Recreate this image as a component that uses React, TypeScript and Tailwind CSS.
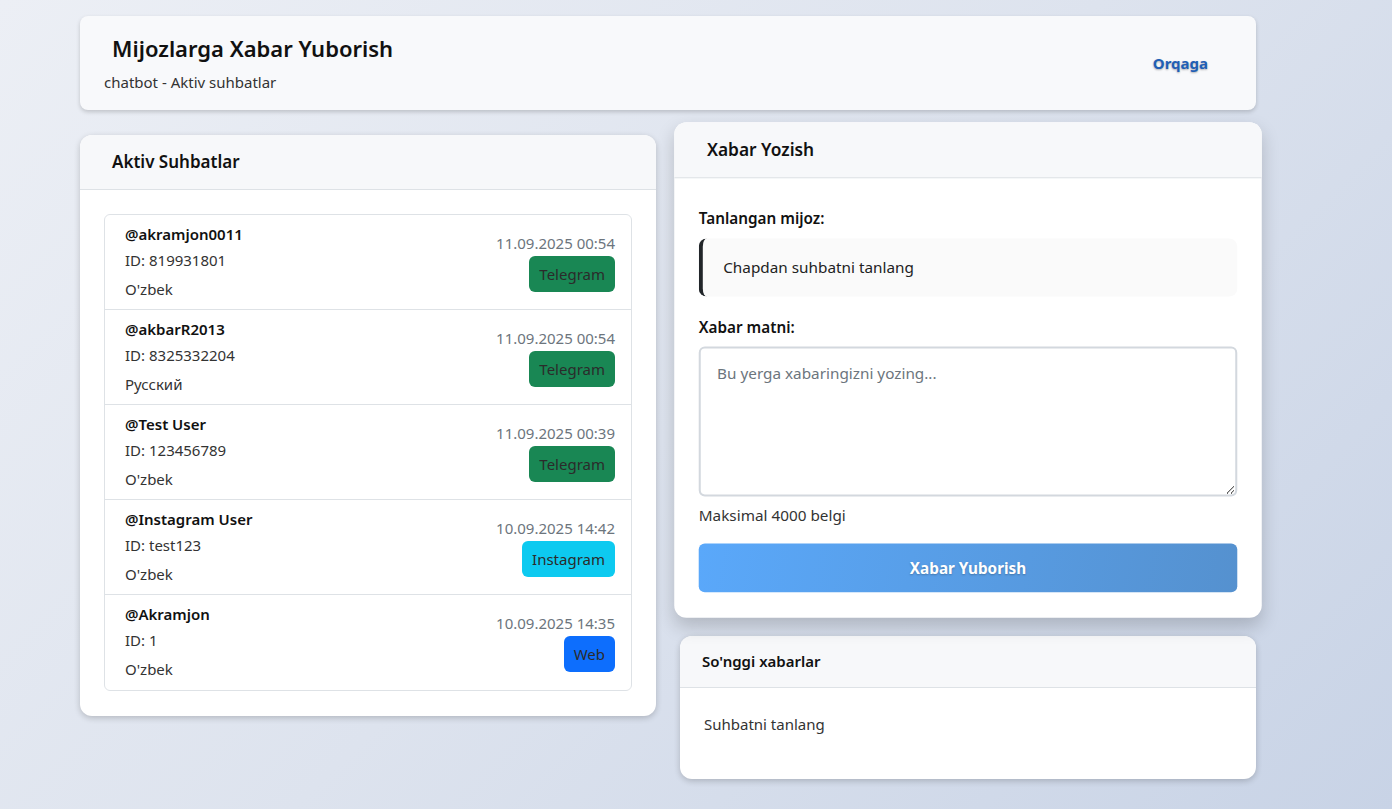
import React, { useState } from "react";

type Chat = {
  username: string;
  id: string;
  lang: string;
  date: string;
  source: "Telegram" | "Instagram" | "Web";
};

const chats: Chat[] = [
  { username: "@akramjon0011", id: "819931801", lang: "O'zbek", date: "11.09.2025 00:54", source: "Telegram" },
  { username: "@akbarR2013", id: "8325332204", lang: "Русский", date: "11.09.2025 00:54", source: "Telegram" },
  { username: "@Test User", id: "123456789", lang: "O'zbek", date: "11.09.2025 00:39", source: "Telegram" },
  { username: "@Instagram User", id: "test123", lang: "O'zbek", date: "10.09.2025 14:42", source: "Instagram" },
  { username: "@Akramjon", id: "1", lang: "O'zbek", date: "10.09.2025 14:35", source: "Web" },
];

const badgeColor: Record<Chat["source"], string> = {
  Telegram: "bg-[#198754]",
  Instagram: "bg-[#0dcaf0]",
  Web: "bg-[#0d6efd]",
};

const ChatItem: React.FC<{ chat: Chat; last: boolean }> = ({ chat, last }) => (
  <div
    className={`flex items-center justify-between pl-5 pr-4 pt-[8px] ${
      last ? "pb-[9px]" : "pb-[8px] border-b border-[#dee2e6]"
    }`}
  >
    <div>
      <div className="text-[15px] leading-[22px] font-semibold text-[#111]">{chat.username}</div>
      <div className="mt-[3px] text-[15px] leading-[24px] text-[#333]">ID: {chat.id}</div>
      <div className="mt-[5px] text-[15px] leading-[24px] text-[#333]">{chat.lang}</div>
    </div>
    <div className="flex flex-col items-end">
      <div className="text-[15px] leading-[22px] text-[#6c757d]">{chat.date}</div>
      <span
        className={`mt-[2px] h-[36px] px-[10px] rounded-md flex items-center text-[15px] text-[#2b2b2b] ${badgeColor[chat.source]}`}
      >
        {chat.source}
      </span>
    </div>
  </div>
);

export default function App() {
  const [message, setMessage] = useState("");

  return (
    <div className="min-h-[809px] bg-[linear-gradient(135deg,#eceff5_0%,#dde3ee_50%,#c8d3e6_100%)] font-['Noto_Sans',sans-serif] text-[#212529] pt-4 pb-8">
      <div className="ml-[80px] w-[1176px]">
        {/* header */}
        <div className="h-[94px] bg-[#f8f9fb] rounded-lg shadow-[0_2px_4px_rgba(0,0,0,0.18)] flex items-center justify-between pl-6 pr-12">
          <div>
            <h1 className="ml-2 text-[22px] leading-[29px] font-semibold text-[#111]">
              Mijozlarga Xabar Yuborish
            </h1>
            <p className="mt-[8px] text-[15px] leading-[22px] text-[#333]">chatbot - Aktiv suhbatlar</p>
          </div>
          <a className="text-[15px] font-bold text-[#1f5fb5] [text-shadow:0_1px_2px_rgba(0,0,0,0.3)] cursor-pointer">
            Orqaga
          </a>
        </div>

        <div className="mt-[25px] grid grid-cols-2 gap-6 items-start">
          {/* left: active chats */}
          <div className="bg-white rounded-xl shadow-[0_2px_6px_rgba(0,0,0,0.2)] overflow-hidden">
            <div className="h-[55px] bg-[#f7f8fa] border-b border-[#dee2e6] flex items-center px-8">
              <h2 className="text-[17px] font-semibold text-[#111]">Aktiv Suhbatlar</h2>
            </div>
            <div className="px-6 pt-6 pb-[25px]">
              <div className="border border-[#dee2e6] rounded-md">
                {chats.map((c, i) => (
                  <ChatItem key={c.username} chat={c} last={i === chats.length - 1} />
                ))}
              </div>
            </div>
          </div>

          {/* right column */}
          <div className="flex flex-col gap-4">
            <div className="bg-white rounded-xl shadow-[0_8px_18px_rgba(0,0,0,0.18)] overflow-hidden -translate-y-2 scale-[1.02]">
              <div className="h-[55px] bg-[#f7f8fa] border-b border-[#dee2e6] flex items-center px-8">
                <h2 className="text-[17px] font-semibold text-[#111]">Xabar Yozish</h2>
              </div>
              <div className="px-6 pt-[27px] pb-[25px]">
                <label className="block text-[15px] leading-[24px] font-semibold text-[#111]">
                  Tanlangan mijoz:
                </label>
                <div className="mt-2 h-[57px] bg-[#fafafa] border-l-4 border-[#212529] rounded-lg flex items-center px-5 text-[15px] text-[#222]">
                  Chapdan suhbatni tanlang
                </div>
                <label className="mt-[18px] block text-[15px] leading-[24px] font-semibold text-[#111]">
                  Xabar matni:
                </label>
                <textarea
                  value={message}
                  onChange={(e) => setMessage(e.target.value)}
                  placeholder="Bu yerga xabaringizni yozing..."
                  className="mt-[7px] block w-full h-[147px] border-2 border-[#d3d8de] rounded-md px-4 py-3 text-[15px] leading-[24px] placeholder:text-[#6c757d] outline-none"
                />
                <div className="mt-[6px] text-[15px] leading-[24px] text-[#333]">Maksimal 4000 belgi</div>
                <button className="mt-[16px] w-full h-[48px] rounded-md bg-[linear-gradient(100deg,#5aa8fa_0%,#5591cf_100%)] text-white text-[15px] font-bold [text-shadow:0_1px_2px_rgba(0,0,0,0.25)]">
                  Xabar Yuborish
                </button>
              </div>
            </div>

            <div className="-mt-px bg-white rounded-xl shadow-[0_2px_6px_rgba(0,0,0,0.2)] overflow-hidden">
              <div className="h-[52px] bg-[#f7f8fa] border-b border-[#dee2e6] flex items-center px-[22px]">
                <h3 className="text-[15px] font-semibold text-[#111]">So'nggi xabarlar</h3>
              </div>
              <div className="px-6 pt-6 pb-[43px]">
                <p className="text-[15px] leading-[24px] text-[#333]">Suhbatni tanlang</p>
              </div>
            </div>
          </div>
        </div>
      </div>
    </div>
  );
}
